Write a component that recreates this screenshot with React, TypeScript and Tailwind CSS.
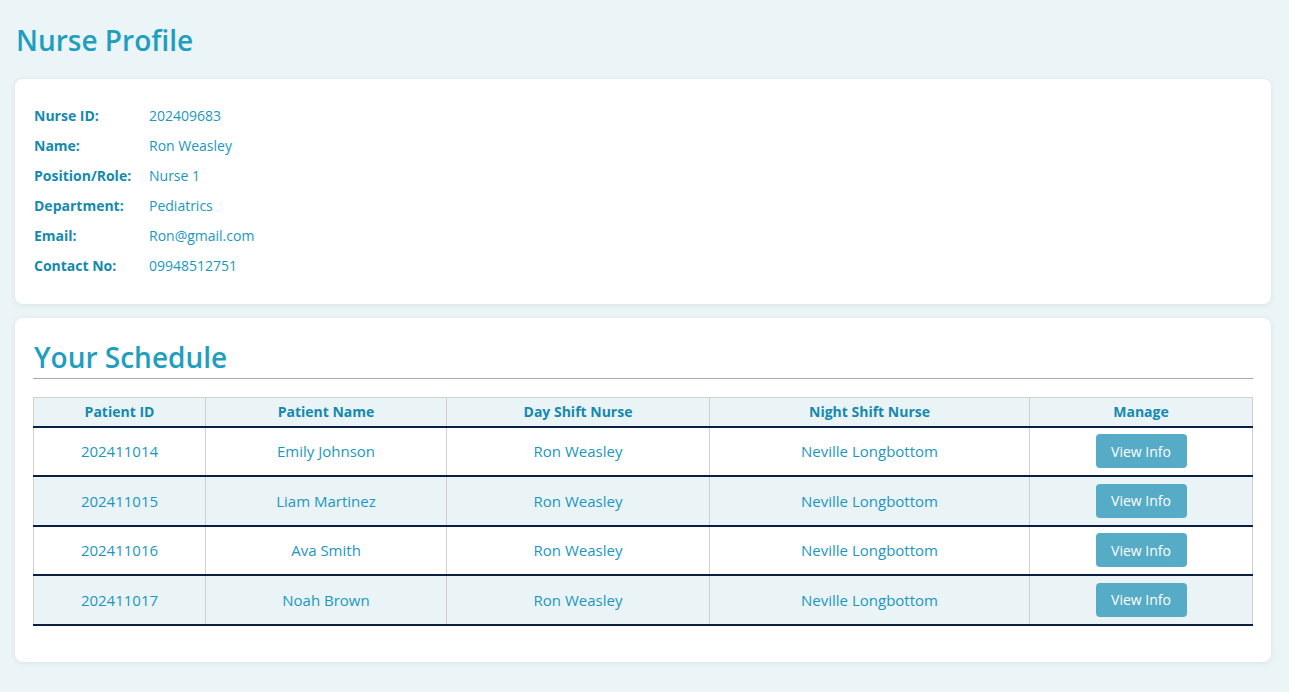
import React from 'react';

const profile: [string, string][] = [
  ['Nurse ID:', '202409683'],
  ['Name:', 'Ron Weasley'],
  ['Position/Role:', 'Nurse 1'],
  ['Department:', 'Pediatrics'],
  ['Email:', 'Ron@gmail.com'],
  ['Contact No:', '09948512751'],
];

const schedule = [
  { id: '202411014', name: 'Emily Johnson' },
  { id: '202411015', name: 'Liam Martinez' },
  { id: '202411016', name: 'Ava Smith' },
  { id: '202411017', name: 'Noah Brown' },
];

export default function App() {
  return (
    <div className="min-h-screen bg-[#ebf4f7] pl-[15px] pr-[18px] pt-[20px] pb-8 text-[#1b97bd]" style={{ fontFamily: "'Open Sans', 'Noto Sans', sans-serif" }}>
      {/* ── HEADER ── */}
      <h1 className="ml-px text-[28px] font-semibold leading-[40px] text-[#1f9ebf]">Nurse Profile</h1>

      {/* ── PROFILE CARD ── */}
      <section className="mt-[19px] rounded-lg bg-white px-[19px] pt-[21px] pb-[24px] shadow-[0_1px_6px_rgba(0,0,0,0.08)]">
        <div className="flex flex-col">
          {profile.map(([label, value]) => (
            <div key={label} className="flex h-[30px] items-center text-[14px]">
              <span className="w-[115px] font-bold text-[#1589ad]">{label}</span>
              <span className="text-[#1b97bd]">{value}</span>
            </div>
          ))}
        </div>
      </section>

      {/* ── SCHEDULE CARD ── */}
      <section className="mt-[14px] rounded-lg bg-white px-[18px] pt-[20px] pb-[36px] shadow-[0_1px_6px_rgba(0,0,0,0.08)]">
        <h2 className="pl-px text-[28px] font-semibold leading-[38px] text-[#1f9ebf]">Your Schedule</h2>
        <div className="mt-[2px] h-px bg-[#a9a9a9]" />

        <table className="mt-[18px] w-full table-fixed border-collapse text-center">
          <colgroup>
            <col className="w-[172px]" />
            <col className="w-[241px]" />
            <col className="w-[263px]" />
            <col className="w-[320px]" />
            <col />
          </colgroup>
          <thead>
            <tr className="h-[29px] bg-[#eaf4f7] text-[14px] font-bold text-[#1589ad]">
              <th className="border border-[#d0d0d0] border-b-[#0b1f45] border-b-2">Patient ID</th>
              <th className="border border-[#d0d0d0] border-b-[#0b1f45] border-b-2">Patient Name</th>
              <th className="border border-[#d0d0d0] border-b-[#0b1f45] border-b-2">Day Shift Nurse</th>
              <th className="border border-[#d0d0d0] border-b-[#0b1f45] border-b-2">Night Shift Nurse</th>
              <th className="border border-[#d0d0d0] border-b-[#0b1f45] border-b-2">Manage</th>
            </tr>
          </thead>
          <tbody>
            {schedule.map((row, i) => (
              <tr key={row.id} className={`h-[49.5px] text-[15px] ${i % 2 === 1 ? 'bg-[#eaf4f7]' : 'bg-white'}`}>
                <td className="border-x border-[#d0d0d0] border-b-2 border-b-[#0b1f45]">{row.id}</td>
                <td className="border-x border-[#d0d0d0] border-b-2 border-b-[#0b1f45]">{row.name}</td>
                <td className="border-x border-[#d0d0d0] border-b-2 border-b-[#0b1f45]">Ron Weasley</td>
                <td className="border-x border-[#d0d0d0] border-b-2 border-b-[#0b1f45]">Neville Longbottom</td>
                <td className="border-x border-[#d0d0d0] border-b-2 border-b-[#0b1f45]">
                  <button className="h-[34px] w-[91px] rounded bg-[#56abc6] text-[14px] text-white">View Info</button>
                </td>
              </tr>
            ))}
          </tbody>
        </table>
      </section>
    </div>
  );
}
